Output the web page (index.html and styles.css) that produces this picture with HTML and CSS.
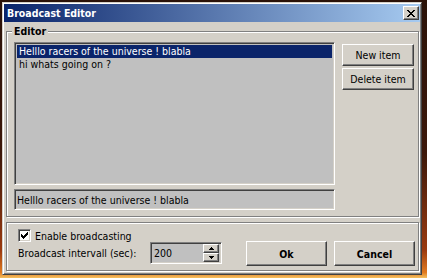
FILE: index.html
```html
<!DOCTYPE html>
<html lang="en">
<head>
  <meta charset="UTF-8" />
  <meta name="viewport" content="width=device-width, initial-scale=1" />
  <title>Broadcast Editor</title>
  <link rel="stylesheet" href="styles.css">
</head>
<body>

  <div class="window">
    <div class="titlebar">
      <span class="title">Broadcast Editor</span>
      <button class="close-btn" title="Close">
        <svg width="8" height="7" viewBox="0 0 8 7" shape-rendering="crispEdges">
          <path fill="#000" d="M0 0h2v1H0z M6 0h2v1H6z M1 1h2v1H1z M5 1h2v1H5z M2 2h4v1H2z M3 3h2v1H3z M2 4h4v1H2z M1 5h2v1H1z M5 5h2v1H5z M0 6h2v1H0z M6 6h2v1H6z"/>
        </svg>
      </button>
    </div>

    <div class="group editor">
      <div class="group-caption">Editor</div>
      <div class="editor-body">
        <div class="editor-main">
          <div class="listbox">
            <div class="list-item selected">Helllo racers of the universe ! blabla</div>
            <div class="list-item">hi whats going on ?</div>
          </div>
          <input class="textbox" type="text" value="Helllo racers of the universe ! blabla" />
        </div>
        <div class="editor-side">
          <button class="btn">New item</button>
          <button class="btn">Delete item</button>
        </div>
      </div>
    </div>

    <div class="group settings">
      <div class="settings-fields">
        <label class="check-row">
          <span class="checkbox">
            <svg width="7" height="7" viewBox="0 0 7 7" shape-rendering="crispEdges">
              <path fill="#000" d="M6 0h1v1H6z M5 1h2v1H5z M0 2h1v1H0z M4 2h3v1H4z M0 3h2v1H0z M3 3h3v1H3z M0 4h5v1H0z M1 5h3v1H1z M2 6h1v1H2z"/>
            </svg>
          </span>
          Enable broadcasting
        </label>
        <div class="interval-row">
          <span class="interval-label">Broadcast intervall (sec):</span>
          <div class="spinbox">
            <span class="spin-value">200</span>
            <div class="spin-buttons">
              <span class="spin-btn">
                <svg width="5" height="3" viewBox="0 0 5 3" shape-rendering="crispEdges">
                  <path fill="#000" d="M2 0h1v1H2z M1 1h3v1H1z M0 2h5v1H0z"/>
                </svg>
              </span>
              <span class="spin-btn">
                <svg width="5" height="3" viewBox="0 0 5 3" shape-rendering="crispEdges">
                  <path fill="#000" d="M0 0h5v1H0z M1 1h3v1H1z M2 2h1v1H2z"/>
                </svg>
              </span>
            </div>
          </div>
        </div>
      </div>
      <div class="actions">
        <button class="btn btn-wide">Ok</button>
        <button class="btn btn-wide">Cancel</button>
      </div>
    </div>
  </div>

</body>
</html>
```

FILE: styles.css
```css
* {
  box-sizing: border-box;
}

body {
  margin: 0;
  padding: 2px;
  height: 278px;
  overflow: hidden;
  background: linear-gradient(#2a1208, #3c180a 55%, #9a3a10 90%, #e07a20 98%, #f4c060);
  font-family: "DejaVu Sans Condensed", "Liberation Sans", Arial, sans-serif;
  font-size: 10.5px;
  color: #000;
}

/* window frame */
.window {
  width: 420px;
  height: 273px;
  padding: 1px;
  background: #d4d0c8;
  border: 1px solid;
  border-color: #d4d0c8 #404040 #404040 #d4d0c8;
  box-shadow: inset 1px 1px #fff, inset -1px -1px #808080;
  display: flex;
  flex-direction: column;
}

.titlebar {
  height: 18px;
  display: flex;
  align-items: center;
  justify-content: space-between;
  padding: 0 1px 0 3px;
  background: linear-gradient(to right, #0a246a, #a6caf0);
  color: #fff;
}

.title {
  font-weight: bold;
}

.close-btn {
  width: 16px;
  height: 14px;
  padding: 0;
  display: flex;
  align-items: center;
  justify-content: center;
  background: #d4d0c8;
  border: 1px solid;
  border-color: #fff #404040 #404040 #fff;
  box-shadow: inset -1px -1px #808080;
}

/* raised buttons */
.btn {
  font: inherit;
  color: #000;
  padding: 0;
  width: 72px;
  height: 22px;
  background: #d4d0c8;
  border: 1px solid;
  border-color: #fff #404040 #404040 #fff;
  box-shadow: inset -1px -1px #808080;
}

.btn-wide {
  width: 81px;
  height: 25px;
  font-weight: bold;
}

/* sunken fields */
.listbox,
.textbox,
.spinbox {
  background: #c0c0c0;
  border: 1px solid;
  border-color: #808080 #fff #fff #808080;
  box-shadow: inset 1px 1px #404040, inset -1px -1px #d4d0c8;
}

/* group boxes */
.group {
  margin: 0 1px 0 2px;
  border: 1px solid #808080;
  box-shadow: 1px 1px #fff, inset 1px 1px #fff;
}

.group-caption {
  width: fit-content;
  margin: -7px 0 4px -2px;
  padding: 0 2px;
  line-height: 13px;
  font-weight: bold;
  background: #d4d0c8;
}

.editor {
  margin-top: 9px;
  padding: 0 4px 6px 7px;
}

.editor-body {
  display: flex;
  gap: 7px;
}

.editor-main {
  width: 321px;
  display: flex;
  flex-direction: column;
  gap: 4px;
}

.listbox {
  height: 143px;
  padding: 2px;
}

.list-item {
  height: 13px;
  line-height: 13px;
  padding-left: 2px;
  white-space: nowrap;
}

.list-item.selected {
  background: #0a246a;
  color: #fff;
}

.textbox {
  height: 21px;
  padding: 0 2px;
  font: inherit;
  color: #000;
  outline: none;
}

.editor-side {
  margin-top: 2px;
  display: flex;
  flex-direction: column;
  gap: 2px;
}

.settings {
  margin-top: 5px;
  height: 49px;
  padding: 6px 3px 4px 11px;
  display: flex;
  justify-content: space-between;
}

.settings-fields {
  display: flex;
  flex-direction: column;
}

.check-row {
  height: 13px;
  display: flex;
  align-items: center;
  gap: 4px;
}

.checkbox {
  width: 13px;
  height: 13px;
  display: flex;
  align-items: center;
  justify-content: center;
  background: #fff;
  border: 1px solid;
  border-color: #808080 #fff #fff #808080;
  box-shadow: inset 1px 1px #404040, inset -1px -1px #d4d0c8;
}

.interval-row {
  display: flex;
  align-items: center;
}

.interval-label {
  width: 132px;
}

.spinbox {
  width: 72px;
  height: 22px;
  padding: 2px;
  display: flex;
  align-items: center;
  justify-content: space-between;
}

.spin-value {
  padding-left: 1px;
}

.spin-buttons {
  display: flex;
  flex-direction: column;
}

.spin-btn {
  width: 16px;
  height: 9px;
  display: flex;
  align-items: center;
  justify-content: center;
  background: #d4d0c8;
  border: 1px solid;
  border-color: #fff #404040 #404040 #fff;
  box-shadow: inset -1px -1px #808080;
}

.actions {
  align-self: flex-end;
  display: flex;
  gap: 7px;
}
```
